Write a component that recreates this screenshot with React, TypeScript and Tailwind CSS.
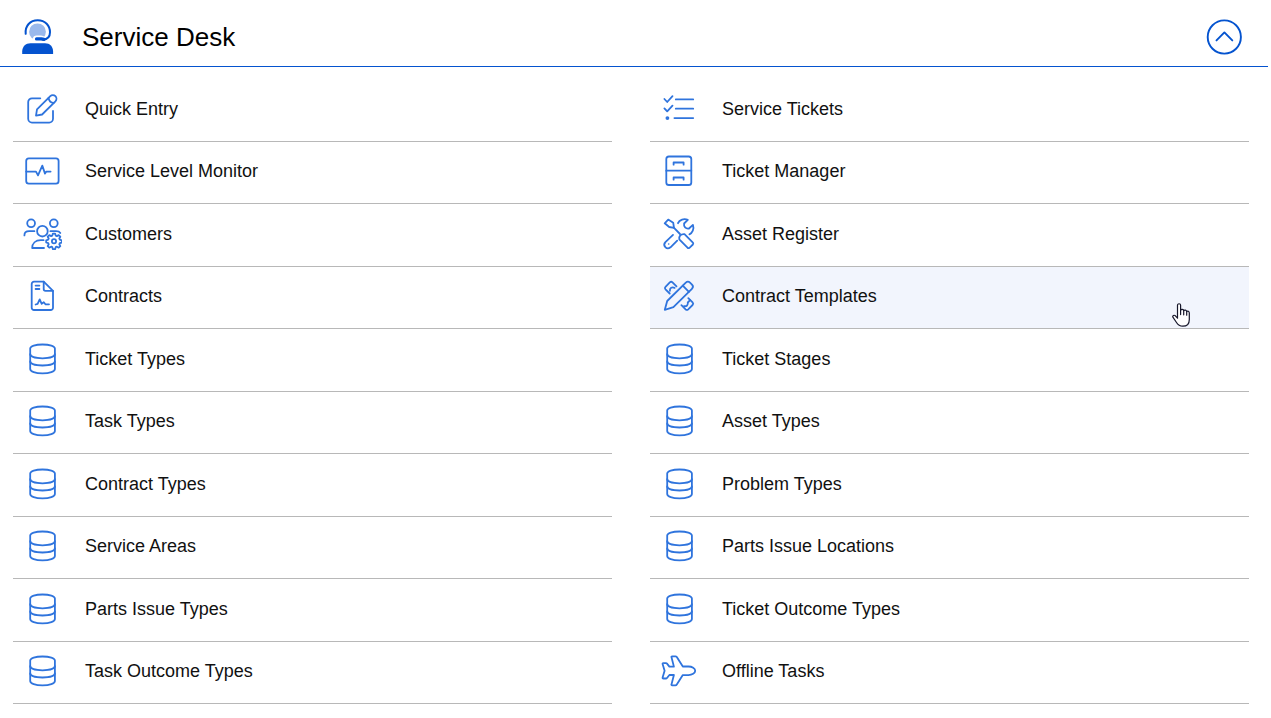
import React from 'react';

type IconProps = { children: React.ReactNode };

function Icon({ children }: IconProps) {
  return (
    <svg
      viewBox="0 0 40 40"
      className="size-10 shrink-0"
      fill="none"
      stroke="#2f74dd"
      strokeWidth="1.8"
      strokeLinecap="round"
      strokeLinejoin="round"
      aria-hidden="true"
    >
      {children}
    </svg>
  );
}

const EditIcon = () => (
  <Icon>
    <path d="M18.3 9.3H10A3.8 3.8 0 0 0 6.2 13.1V29.8A3.8 3.8 0 0 0 10 33.6H27.2A3.8 3.8 0 0 0 31 29.8V21.9" />
    <path d="M14 26.7L15 20.4L28.3 7.2A3.6 3.6 0 0 1 33.4 12.3L20.1 25.5Z" />
    <path d="M26.6 8.9C26.9 11.8 28.8 13.7 31.7 14" />
  </Icon>
);

const MonitorIcon = () => (
  <Icon>
    <rect x="4.2" y="7.3" width="32.4" height="25.3" rx="2.6" />
    <path d="M4.2 20.6H14L16 24.4L20.3 14.6L23 22.6L24.4 20.6H28.6" />
  </Icon>
);

const CustomersIcon = () => (
  <Icon>
    <circle cx="9.1" cy="9.3" r="3.9" />
    <circle cx="31.8" cy="9.3" r="3.9" />
    <circle cx="20.4" cy="17.2" r="5.3" />
    <path d="M2.4 21.4C2.4 18.6 4.2 17.2 7.2 17.2H12.4" />
    <path d="M28.4 17.2H34C36.1 17.2 37.6 17.8 38.3 19" />
    <path d="M22 34H10.2C10.2 29.4 13.6 26.2 18.8 26.2H21.6" />
    <circle cx="32" cy="27.2" r="2.1" />
    <path d="M30.9 20.8h2.2l.6 2 1.2.5 1.8-1 1.6 1.6-1 1.8.5 1.2 2 .6v2.2l-2 .6-.5 1.2 1 1.8-1.6 1.6-1.8-1-1.2.5-.6 2h-2.2l-.6-2-1.2-.5-1.8 1-1.6-1.6 1-1.8-.5-1.2-2-.6v-2.2l2-.6.5-1.2-1-1.8 1.6-1.6 1.8 1 1.2-.5Z" transform="translate(0 -1.2)" />
  </Icon>
);

const ContractIcon = () => (
  <Icon>
    <path d="M21.7 5.6H12A2.3 2.3 0 0 0 9.7 7.9V31.7A2.3 2.3 0 0 0 12 34H28.7A2.3 2.3 0 0 0 31 31.7V14.8Z" />
    <path d="M21.7 5.6V13A1.8 1.8 0 0 0 23.5 14.8H31" />
    <path d="M13.6 9.6H17.4M13.6 13H17.4" />
    <path d="M13.6 28.5L15.6 27.8L17.7 23.4L19.7 27.8L21.8 26.3L23.4 28.3H27" />
  </Icon>
);

const DatabaseIcon = () => (
  <Icon>
    <path d="M8.2 9.6C8.2 7.3 13.4 5.5 20.5 5.5S32.9 7.3 32.9 9.6V30C32.9 32.5 27.6 34.4 20.5 34.4S8.2 32.5 8.2 30Z" />
    <path d="M8.2 15.1C8.2 17.6 13.4 19.3 20.5 19.3S32.9 17.6 32.9 15.1" />
    <path d="M8.2 22.3C8.2 24.8 13.4 26.5 20.5 26.5S32.9 24.8 32.9 22.3" />
  </Icon>
);

const ChecklistIcon = () => (
  <Icon>
    <path d="M5.4 10L8.2 13L13.5 7.2M5.4 19.4L8.2 22.4L13.5 16.6" />
    <path d="M16.8 10.4H34.2M16.8 19.7H34.2M15.4 29.1H34.2" />
    <circle cx="8.4" cy="29.1" r="1.9" fill="#2f74dd" stroke="none" />
  </Icon>
);

const CabinetIcon = () => (
  <Icon>
    <rect x="7.3" y="5.5" width="25" height="28.5" rx="2.6" />
    <path d="M7.3 19.7H32.3M14.6 13.7V11.5H24.6V13.7M14.6 28.7V26.5H24.6V28.7" />
  </Icon>
);

const ToolsIcon = () => (
  <Icon>
    <path d="M5.7 9.3L9.2 5.6L14.2 8.7L15 13.8L10.2 13Z" />
    <path d="M14.8 13.7L21 20" />
    <path d="M20.3 25.4C19.8 22 21.6 19.8 25.5 20.1L33.9 28.6C34.4 29.3 34.4 29.9 33.9 30.5L30.4 33.8C29.8 34.3 29.2 34.3 28.5 33.7Z" />
    <path d="M14 20.9L6.4 28.2C3.3 31.6 7.6 36.4 11.5 33.3L18.2 26.6" />
    <path d="M19 9.2C20.4 5.6 25.1 4.3 28.8 5.9L25.1 9.5C24.5 12.6 26.7 15.1 30 14.5L33.9 10.9C35.4 14.9 33.3 19.2 30.4 20.3" />
    <circle cx="9.7" cy="30" r=".8" fill="#2f74dd" stroke="none" />
  </Icon>
);

const TemplateIcon = () => (
  <Icon>
    <path d="M5.8 33.8L8.2 25L26.8 6.7Q28.9 4.6 31 6.7L33 8.7Q35 10.8 32.9 12.9L14.4 31.2Z" />
    <path d="M23.8 9.7L29.9 15.8" />
    <path d="M10.7 17.5L6.5 13.3Q5.3 12 6.5 10.8L10.8 6.4Q12.2 5.2 13.5 6.4L17.5 10.3" />
    <path d="M15.6 11.8C13 10.7 10.7 12 10.9 14.8" />
    <path d="M29.3 22.1L33.6 26.4Q34.8 27.7 33.6 29L29.2 33.3Q27.9 34.5 26.6 33.3L22.4 29.2" />
    <path d="M31.1 24.2L28.8 26.5C29.2 29.2 27.7 30.6 25 30.2" />
  </Icon>
);

const PlaneIcon = () => (
  <Icon>
    <path d="M36.2 19.8C36.2 17.4 33 15.5 29.5 15.5H23.8L17.8 6.1C17.4 5.5 17 5.3 16.4 5.3H13.1Q12.2 5.3 12.5 6.2L14.9 15.6H10.4L8 12.6Q7.6 12.1 7 12.1H4.3Q3.4 12.1 3.6 13L5.6 19.8L3.6 26.6Q3.4 27.5 4.3 27.5H7Q7.6 27.5 8 27L10.4 24H14.9L12.5 33.4Q12.2 34.3 13.1 34.3H16.4C17 34.3 17.4 34.1 17.8 33.5L23.8 24.1H29.5C33 24.1 36.2 22.2 36.2 19.8Z" />
  </Icon>
);

function AgentIcon() {
  return (
    <svg viewBox="0 0 40 40" className="size-10 shrink-0" fill="none" aria-hidden="true">
      <circle cx="19.5" cy="14.8" r="8.4" fill="#9ab9ec" />
      <path d="M14.8 24V22C14.8 19.4 16.6 18.4 18.6 18.4H22.6C25 18.4 26.4 19.4 27.6 21L24 25.5Z" fill="#fff" />
      <path
        d="M7.7 16.8C6.9 8.8 12.2 3.2 19.7 3.2S32 8.6 32 15.3C32 19.8 29.2 22.4 25 22.6"
        stroke="#0453cf"
        strokeWidth="2"
        strokeLinecap="round"
      />
      <path d="M18.6 21.9H23.2L26 22.4" stroke="#0453cf" strokeWidth="3.4" strokeLinecap="round" strokeLinejoin="round" />
      <path d="M4.2 37V34.5C4.2 29.6 7.6 26.2 12.5 26.2H27C31.8 26.2 35.1 29.6 35.1 34.5V37Z" fill="#0453cf" />
    </svg>
  );
}

function HandCursor() {
  return (
    <svg
      viewBox="0 0 18 24"
      className="pointer-events-none absolute top-9 right-[59px] h-6 w-[18px]"
      fill="#fff"
      stroke="#16162a"
      strokeWidth="1.2"
      strokeLinejoin="round"
      strokeLinecap="round"
      aria-hidden="true"
    >
      <path d="M5.5 15.2V2.3C5.5 .2 8.6 .2 8.6 2.3V7.2C9.3 6 11.5 6.2 11.7 7.6C12.5 6.6 14.5 7 14.7 8.5C15.6 7.7 17.3 8.3 17.3 10V16.4C17.3 20.8 14.6 23.2 10.8 23.2C7.6 23.2 5.9 21.8 4.5 19.5L.9 14.2C.2 12.7 2.1 11.6 3.4 12.8Z" />
      <path d="M8.6 7.2V11.6M11.7 7.7V11.8M14.7 8.6V12.2" />
    </svg>
  );
}

type Item = { label: string; icon: React.ComponentType; active?: boolean };

const leftItems: Item[] = [
  { label: 'Quick Entry', icon: EditIcon },
  { label: 'Service Level Monitor', icon: MonitorIcon },
  { label: 'Customers', icon: CustomersIcon },
  { label: 'Contracts', icon: ContractIcon },
  { label: 'Ticket Types', icon: DatabaseIcon },
  { label: 'Task Types', icon: DatabaseIcon },
  { label: 'Contract Types', icon: DatabaseIcon },
  { label: 'Service Areas', icon: DatabaseIcon },
  { label: 'Parts Issue Types', icon: DatabaseIcon },
  { label: 'Task Outcome Types', icon: DatabaseIcon },
];

const rightItems: Item[] = [
  { label: 'Service Tickets', icon: ChecklistIcon },
  { label: 'Ticket Manager', icon: CabinetIcon },
  { label: 'Asset Register', icon: ToolsIcon },
  { label: 'Contract Templates', icon: TemplateIcon, active: true },
  { label: 'Ticket Stages', icon: DatabaseIcon },
  { label: 'Asset Types', icon: DatabaseIcon },
  { label: 'Problem Types', icon: DatabaseIcon },
  { label: 'Parts Issue Locations', icon: DatabaseIcon },
  { label: 'Ticket Outcome Types', icon: DatabaseIcon },
  { label: 'Offline Tasks', icon: PlaneIcon },
];

function MenuColumn({ items }: { items: Item[] }) {
  return (
    <ul className="min-w-0 flex-1">
      {items.map(({ label, icon: ItemIcon, active }) => (
        <li
          key={label}
          className={
            active
              ? 'relative border-b border-[#b8b8b8] bg-[#f2f5fd] odd:h-[63px] even:h-[62px]'
              : 'border-b border-[#b8b8b8] odd:h-[63px] even:h-[62px] hover:bg-[#f2f5fd]'
          }
        >
          <a href="#" className="flex h-full items-center gap-[23px] pb-[3px] pl-[9px] text-[18px] leading-6 text-[#111]">
            <ItemIcon />
            <span>{label}</span>
          </a>
          {active && <HandCursor />}
        </li>
      ))}
    </ul>
  );
}

export default function App() {
  return (
    <div className="min-h-screen bg-white font-['Liberation_Sans',Arial,sans-serif]">
      <header className="mr-[3px] flex items-center border-b border-[#0453cf] pt-[17px] pr-[26px] pb-[9px] pl-[18px]">
        <AgentIcon />
        <h1 className="ml-6 flex-1 text-[26px] leading-10 text-black">Service Desk</h1>
        <button type="button" aria-label="Collapse Service Desk" className="size-9 cursor-pointer">
          <svg viewBox="0 0 36 36" className="size-9" fill="none" stroke="#0453cf" strokeWidth="1.9" strokeLinecap="round" strokeLinejoin="round" aria-hidden="true">
            <circle cx="18.3" cy="18" r="16.6" />
            <path d="M10.5 21.4L18.4 13.4L26.3 21.4" />
          </svg>
        </button>
      </header>
      <nav aria-label="Service Desk" className="flex gap-[38px] pt-3 pr-[22px] pl-[13px]">
        <MenuColumn items={leftItems} />
        <MenuColumn items={rightItems} />
      </nav>
    </div>
  );
}
